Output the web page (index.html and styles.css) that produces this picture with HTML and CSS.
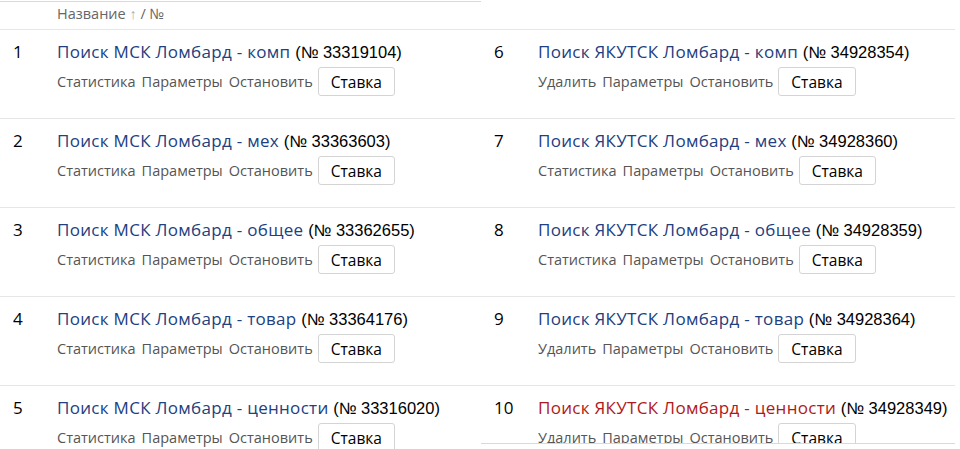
FILE: index.html
```html
<!DOCTYPE html>
<html lang="ru">
<head>
    <meta charset="UTF-8">
    <title>Кампании</title>
    <link rel="stylesheet" href="styles.css">
</head>
<body>
    <div class="sheet">
        <div class="panel panel-left">
            <div class="head">Название <span class="arrow">↑</span> / №</div>
            <div class="row">
                <div class="num">1</div>
                <div class="info">
                    <div class="title"><a href="#">Поиск МСК Ломбард - комп</a> <span class="id">(№ 33319104)</span></div>
                    <div class="actions"><a href="#">Статистика</a> <a href="#">Параметры</a> <a href="#">Остановить</a> <button>Ставка</button></div>
                </div>
            </div>
            <div class="row">
                <div class="num">2</div>
                <div class="info">
                    <div class="title"><a href="#">Поиск МСК Ломбард - мех</a> <span class="id">(№ 33363603)</span></div>
                    <div class="actions"><a href="#">Статистика</a> <a href="#">Параметры</a> <a href="#">Остановить</a> <button>Ставка</button></div>
                </div>
            </div>
            <div class="row">
                <div class="num">3</div>
                <div class="info">
                    <div class="title"><a href="#">Поиск МСК Ломбард - общее</a> <span class="id">(№ 33362655)</span></div>
                    <div class="actions"><a href="#">Статистика</a> <a href="#">Параметры</a> <a href="#">Остановить</a> <button>Ставка</button></div>
                </div>
            </div>
            <div class="row">
                <div class="num">4</div>
                <div class="info">
                    <div class="title"><a href="#">Поиск МСК Ломбард - товар</a> <span class="id">(№ 33364176)</span></div>
                    <div class="actions"><a href="#">Статистика</a> <a href="#">Параметры</a> <a href="#">Остановить</a> <button>Ставка</button></div>
                </div>
            </div>
            <div class="row">
                <div class="num">5</div>
                <div class="info">
                    <div class="title"><a href="#">Поиск МСК Ломбард - ценности</a> <span class="id">(№ 33316020)</span></div>
                    <div class="actions"><a href="#">Статистика</a> <a href="#">Параметры</a> <a href="#">Остановить</a> <button>Ставка</button></div>
                </div>
            </div>
        </div>
        <div class="panel panel-right">
            <div class="head"></div>
            <div class="row">
                <div class="num">6</div>
                <div class="info">
                    <div class="title"><a href="#">Поиск ЯКУТСК Ломбард - комп</a> <span class="id">(№ 34928354)</span></div>
                    <div class="actions"><a href="#">Удалить</a> <a href="#">Параметры</a> <a href="#">Остановить</a> <button>Ставка</button></div>
                </div>
            </div>
            <div class="row">
                <div class="num">7</div>
                <div class="info">
                    <div class="title"><a href="#">Поиск ЯКУТСК Ломбард - мех</a> <span class="id">(№ 34928360)</span></div>
                    <div class="actions"><a href="#">Статистика</a> <a href="#">Параметры</a> <a href="#">Остановить</a> <button>Ставка</button></div>
                </div>
            </div>
            <div class="row">
                <div class="num">8</div>
                <div class="info">
                    <div class="title"><a href="#">Поиск ЯКУТСК Ломбард - общее</a> <span class="id">(№ 34928359)</span></div>
                    <div class="actions"><a href="#">Статистика</a> <a href="#">Параметры</a> <a href="#">Остановить</a> <button>Ставка</button></div>
                </div>
            </div>
            <div class="row">
                <div class="num">9</div>
                <div class="info">
                    <div class="title"><a href="#">Поиск ЯКУТСК Ломбард - товар</a> <span class="id">(№ 34928364)</span></div>
                    <div class="actions"><a href="#">Удалить</a> <a href="#">Параметры</a> <a href="#">Остановить</a> <button>Ставка</button></div>
                </div>
            </div>
            <div class="row row-last">
                <div class="num">10</div>
                <div class="info">
                    <div class="title"><a href="#" class="alert">Поиск ЯКУТСК Ломбард - ценности</a> <span class="id">(№ 34928349)</span></div>
                    <div class="actions"><a href="#">Удалить</a> <a href="#">Параметры</a> <a href="#">Остановить</a> <button>Ставка</button></div>
                </div>
            </div>
        </div>
    </div>
</body>
</html>
```

FILE: styles.css
```css
html, body {
    margin: 0;
    padding: 0;
    background: #fff;
    overflow: hidden;
}
body {
    font-family: "Open Sans", "Noto Sans", sans-serif;
    color: #000;
}
.sheet {
    display: flex;
    height: 449px;
    overflow: hidden;
}
.panel {
    width: 481px;
    flex: none;
}
.panel-left {
    border-top: 1px solid #d9d9d9;
    margin-top: 1px;
}
.panel-right {
    padding-top: 2px;
    width: 474px;
    height: 441px;
    overflow: hidden;
    border-bottom: 1px solid #d9d9d9;
}
.head {
    height: 27px;
    padding-left: 57px;
    font-size: 14.5px;
    line-height: 24px;
    color: #666;
    border-bottom: 1px solid #e6e6e6;
}
.arrow {
    color: #aaa;
}
.row {
    display: flex;
    height: 88px;
    border-bottom: 1px solid #e6e6e6;
}
.row-last {
    border-bottom: none;
}
.num {
    flex: none;
    width: 44px;
    padding-left: 13px;
    padding-top: 11px;
    font-size: 17px;
    line-height: 22px;
}
.info {
    padding-top: 11px;
    min-width: 0;
}
.title {
    font-size: 17px;
    line-height: 22px;
    letter-spacing: 0.3px;
    white-space: nowrap;
}
.title a {
    color: #21407f;
    text-decoration: none;
}
.title a.alert {
    color: #b01820;
}
.title .id {
    font-family: "Liberation Sans", Arial, sans-serif;
    font-size: 16.5px;
    letter-spacing: 0;
}
.actions {
    margin-top: 4px;
    font-size: 14.5px;
    color: #555;
    display: flex;
    align-items: center;
    gap: 6px;
}
.actions a {
    color: #555;
    text-decoration: none;
}
.actions button {
    font-family: inherit;
    font-size: 15.5px;
    height: 29px;
    margin-left: -1px;
    padding: 0 12px;
    background: #fff;
    border: 1px solid #d4d4d4;
    border-radius: 3px;
    color: #000;
}
```
